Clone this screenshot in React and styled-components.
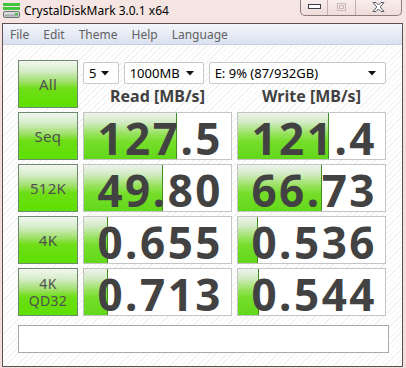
import React from "react";
import styled, { createGlobalStyle } from "styled-components";

const GlobalStyle = createGlobalStyle`
    html, body {
        margin: 0;
        padding: 0;
        width: 406px;
        height: 368px;
        overflow: hidden;
        background: #f2dfdc;
    }
    * {
        box-sizing: border-box;
    }
`;

const rows = [
    { label: ["Seq"], read: "127.5", readBar: 93, write: "121.4", writeBar: 91 },
    { label: ["512K"], read: "49.80", readBar: 79, write: "66.73", writeBar: 84 },
    { label: ["4K"], read: "0.655", readBar: 24, write: "0.536", writeBar: 20 },
    { label: ["4K", "QD32"], read: "0.713", readBar: 24, write: "0.544", writeBar: 21 }
];

function DriveIcon() {
    return (
        <svg width="18" height="16" viewBox="0 0 18 16">
            <rect x="0" y="1" width="17" height="3" fill="#3fc43c" />
            <rect x="0" y="5" width="17" height="3" fill="#3fc43c" />
            <rect x="0.5" y="9.5" width="16" height="6" rx="1.5" fill="#d8dadb" stroke="#6e7377" />
            <rect x="1.5" y="12.5" width="14" height="2" fill="#a6abae" />
            <rect x="12" y="11" width="3" height="2" fill="#3fc43c" />
        </svg>
    );
}

function ArrowDown() {
    return (
        <svg width="8" height="5" viewBox="0 0 8 5">
            <path d="M0 0 H8 L4 4.5 Z" fill="#111" />
        </svg>
    );
}

function App() {
    return (
        <Window>
            <GlobalStyle />
            <TitleBar>
                <DriveIcon />
                <Title>CrystalDiskMark 3.0.1 x64</Title>
                <Caption>
                    <CapButton $w={27}>
                        <svg width="13" height="5" viewBox="0 0 13 5">
                            <rect x="0.5" y="0.5" width="12" height="4" fill="#fff" stroke="#3c3c4a" />
                        </svg>
                    </CapButton>
                    <CapButton $w={28}>
                        <svg width="9" height="8" viewBox="0 0 9 8">
                            <rect x="0.5" y="0.5" width="8" height="7" fill="none" stroke="#cdb8b8" />
                            <rect x="2.5" y="2.5" width="4" height="3" fill="none" stroke="#cdb8b8" />
                        </svg>
                    </CapButton>
                    <CapButton $w={45} $last>
                        <svg width="13" height="10" viewBox="0 0 13 10">
                            <path d="M1 0.5 H4 L6.5 3 L9 0.5 H12 L8.2 5 L12 9.5 H9 L6.5 7 L4 9.5 H1 L4.8 5 Z" fill="#fff" stroke="#4a4a58" strokeWidth="0.9" />
                        </svg>
                    </CapButton>
                </Caption>
            </TitleBar>
            <Frame>
                <MenuBar>
                    {["File", "Edit", "Theme", "Help", "Language"].map(m => (
                        <MenuItem key={m}>{m}</MenuItem>
                    ))}
                </MenuBar>
                <Content>
                    <Grid>
                        <TestButton>All</TestButton>
                        <TopArea>
                            <Selects>
                                <Select $w={36}>
                                    <span>5</span>
                                    <ArrowDown />
                                </Select>
                                <Select $w={81}>
                                    <span>1000MB</span>
                                    <ArrowDown />
                                </Select>
                                <Select $w={180}>
                                    <span>E: 9% (87/932GB)</span>
                                    <ArrowDown />
                                </Select>
                            </Selects>
                            <Headers>
                                <Header>Read [MB/s]</Header>
                                <Header>Write [MB/s]</Header>
                            </Headers>
                        </TopArea>
                        {rows.map(r => (
                            <React.Fragment key={r.label.join(" ")}>
                                <TestButton $small={r.label.length > 1}>
                                    {r.label.map(l => (
                                        <span key={l}>{l}</span>
                                    ))}
                                </TestButton>
                                <Cell>
                                    <Bar style={{ width: r.readBar }} />
                                    <Value>{r.read}</Value>
                                </Cell>
                                <Cell>
                                    <Bar style={{ width: r.writeBar }} />
                                    <Value>{r.write}</Value>
                                </Cell>
                            </React.Fragment>
                        ))}
                    </Grid>
                    <Comment />
                </Content>
            </Frame>
        </Window>
    );
}

export default App;

const Window = styled.div`
    width: 406px;
    height: 368px;
    display: flex;
    flex-direction: column;
    background: linear-gradient(180deg, #f6e6e3 0%, #f1dcd9 40%, #f2dfdc 100%);
`;

const TitleBar = styled.div`
    height: 23px;
    display: flex;
    align-items: flex-start;
    padding: 2px 4px 0 3px;
`;

const Title = styled.div`
    margin-left: 3px;
    font-family: "Noto Sans", sans-serif;
    font-size: 12px;
    line-height: 17px;
    color: #000;
`;

const Caption = styled.div`
    margin-left: auto;
    margin-top: -2px;
    display: flex;
    height: 16px;
    border: 1px solid #8d7b7b;
    border-top: none;
    border-radius: 0 0 5px 5px;
    overflow: hidden;
    background: linear-gradient(180deg, #f8eeec 0%, #eedcd9 100%);
`;

const CapButton = styled.div`
    width: ${p => p.$w}px;
    display: flex;
    align-items: center;
    justify-content: center;
    padding-bottom: 2px;
    border-right: ${p => (p.$last ? "none" : "1px solid #c2aeae")};
`;

const Frame = styled.div`
    flex: 1;
    margin: 0 3px 1px 2px;
    border: 1px solid #5e5050;
    display: flex;
    flex-direction: column;
    background: repeating-linear-gradient(135deg, #ffffff 0px, #ffffff 3px, #f2f2f2 3px, #f2f2f2 4px);
`;

const MenuBar = styled.div`
    height: 21px;
    display: flex;
    align-items: center;
    background: linear-gradient(180deg, #f4f6fb 0%, #e8ecf6 45%, #dbe1f0 100%);
    border-bottom: 1px solid #c8cfe3;
`;

const MenuItem = styled.div`
    padding: 0 7px;
    font-family: "Noto Sans", sans-serif;
    font-size: 12px;
    color: #626262;
`;

const Content = styled.div`
    padding: 15px 0 0 15px;
    display: flex;
    flex-direction: column;
`;

const Grid = styled.div`
    display: grid;
    grid-template-columns: 60px 149px 149px;
    grid-auto-rows: 48px;
    column-gap: 5px;
    row-gap: 4px;
`;

const TestButton = styled.div`
    display: flex;
    flex-direction: column;
    align-items: center;
    justify-content: center;
    border: 1px solid #6e8a6c;
    background: linear-gradient(180deg, #f2f7f0 0%, #d6ecc8 22%, #9fe06a 45%, #6ede16 60%, #5ee000 100%);
    font-family: "Noto Sans", sans-serif;
    font-size: ${p => (p.$small ? "14px" : "15px")};
    line-height: ${p => (p.$small ? "17px" : "18px")};
    color: #505050;
    letter-spacing: 0.3px;
`;

const TopArea = styled.div`
    grid-column: 2 / 4;
    display: flex;
    flex-direction: column;
    padding-top: 2px;
`;

const Selects = styled.div`
    display: flex;
    gap: 5px;
`;

const Select = styled.div`
    width: ${p => p.$w}px;
    height: 22px;
    display: flex;
    align-items: center;
    justify-content: space-between;
    padding: 0 9px 0 5px;
    background: #fff;
    border: 1px solid #c9c9c9;
    border-radius: 2px;
    font-family: "Noto Sans", sans-serif;
    font-size: 13px;
    color: #000;
`;

const Headers = styled.div`
    display: grid;
    grid-template-columns: 149px 149px;
    column-gap: 5px;
    margin-top: 2px;
`;

const Header = styled.div`
    text-align: center;
    font-family: "Noto Sans", sans-serif;
    font-weight: 700;
    font-size: 16px;
    line-height: 21px;
    color: #414141;
`;

const Cell = styled.div`
    position: relative;
    display: flex;
    align-items: center;
    justify-content: flex-end;
    border: 1px solid #c4c4c4;
    background: #fff;
`;

const Bar = styled.div`
    position: absolute;
    left: 0;
    top: 0;
    bottom: 0;
    border-right: 1px solid #3f8f1f;
    background: linear-gradient(180deg, #eef3ec 0%, #d2ebc4 20%, #98e25e 45%, #76de2a 62%, #62d81a 100%);
`;

const Value = styled.div`
    position: relative;
    padding-right: 8px;
    margin-top: 3px;
    font-family: "Noto Sans", sans-serif;
    font-weight: 700;
    font-size: 44px;
    line-height: 44px;
    letter-spacing: 2.5px;
    color: #424242;
`;

const Comment = styled.div`
    margin-top: 9px;
    width: 371px;
    height: 28px;
    background: #fff;
    border: 1px solid #a9a9a9;
`;
